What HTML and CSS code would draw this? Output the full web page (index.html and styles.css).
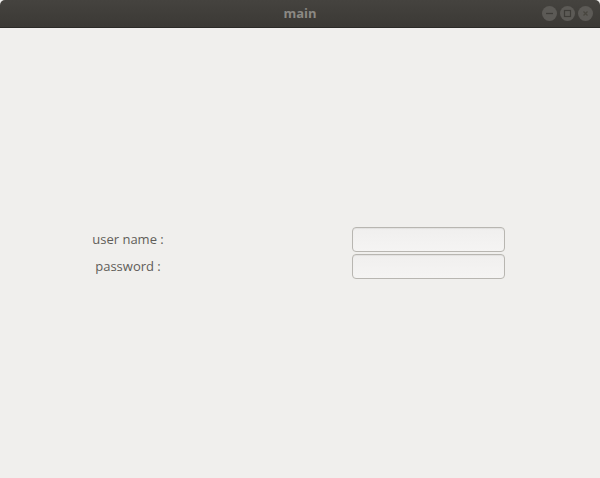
FILE: index.html
```html
<!DOCTYPE html>
<html>
<head>
<meta charset="utf-8">
<link rel="stylesheet" href="styles.css">
</head>
<body>
<div class="window">
  <div class="titlebar">
    <div class="side"></div>
    <div class="title">main</div>
    <div class="side buttons">
      <span class="btn"><svg width="15" height="15" viewBox="0 0 15 15"><line x1="4" y1="7.5" x2="11" y2="7.5" stroke="#3e3c38" stroke-width="1.3"/></svg></span>
      <span class="btn"><svg width="15" height="15" viewBox="0 0 15 15"><rect x="4.5" y="4.5" width="6" height="6" fill="none" stroke="#3e3c38" stroke-width="1.2"/></svg></span>
      <span class="btn"><svg width="15" height="15" viewBox="0 0 15 15"><path d="M5.5 5.5 L9.5 9.5 M9.5 5.5 L5.5 9.5" stroke="#48463f" stroke-width="1.2"/></svg></span>
    </div>
  </div>
  <div class="content">
    <div class="form">
      <div class="label">user name :</div>
      <div class="field"></div>
      <div class="label">password :</div>
      <div class="field"></div>
    </div>
  </div>
</div>
</body>
</html>
```
FILE: styles.css
```css
html, body {
  margin: 0;
  padding: 0;
  width: 600px;
  height: 478px;
  overflow: hidden;
  background: #f0efed;
}
.window {
  display: flex;
  flex-direction: column;
  height: 478px;
  font-family: "Open Sans", "DejaVu Sans", sans-serif;
}
.titlebar {
  height: 27px;
  border-bottom: 1px solid #2b2a27;
  background: linear-gradient(#45433f, #3b3935);
  border-radius: 5px 5px 0 0;
  display: grid;
  grid-template-columns: 1fr auto 1fr;
  align-items: center;
}
.title {
  color: #8b8984;
  font-weight: bold;
  font-size: 13px;
  line-height: 27px;
}
.buttons {
  display: flex;
  justify-content: flex-end;
  gap: 3px;
  padding-right: 7px;
}
.btn {
  width: 15px;
  height: 15px;
  border-radius: 50%;
  background: #5c5a56;
  display: block;
}
.btn svg { display: block; }
.content {
  flex: 1;
  background: #f0efed;
  padding-top: 199px;
}
.form {
  display: grid;
  grid-template-columns: 240px 153px;
  column-gap: 104px;
  row-gap: 2px;
  padding-left: 8px;
}
.label {
  height: 25px;
  line-height: 25px;
  text-align: center;
  color: #5f5d59;
  font-size: 13px;
}
.field {
  height: 23px;
  border: 1px solid #b8b6b1;
  border-radius: 4px;
  background: linear-gradient(#f0efee, #f5f4f3);
  box-shadow: inset 0 1px 1px rgba(0,0,0,0.06);
}
```
